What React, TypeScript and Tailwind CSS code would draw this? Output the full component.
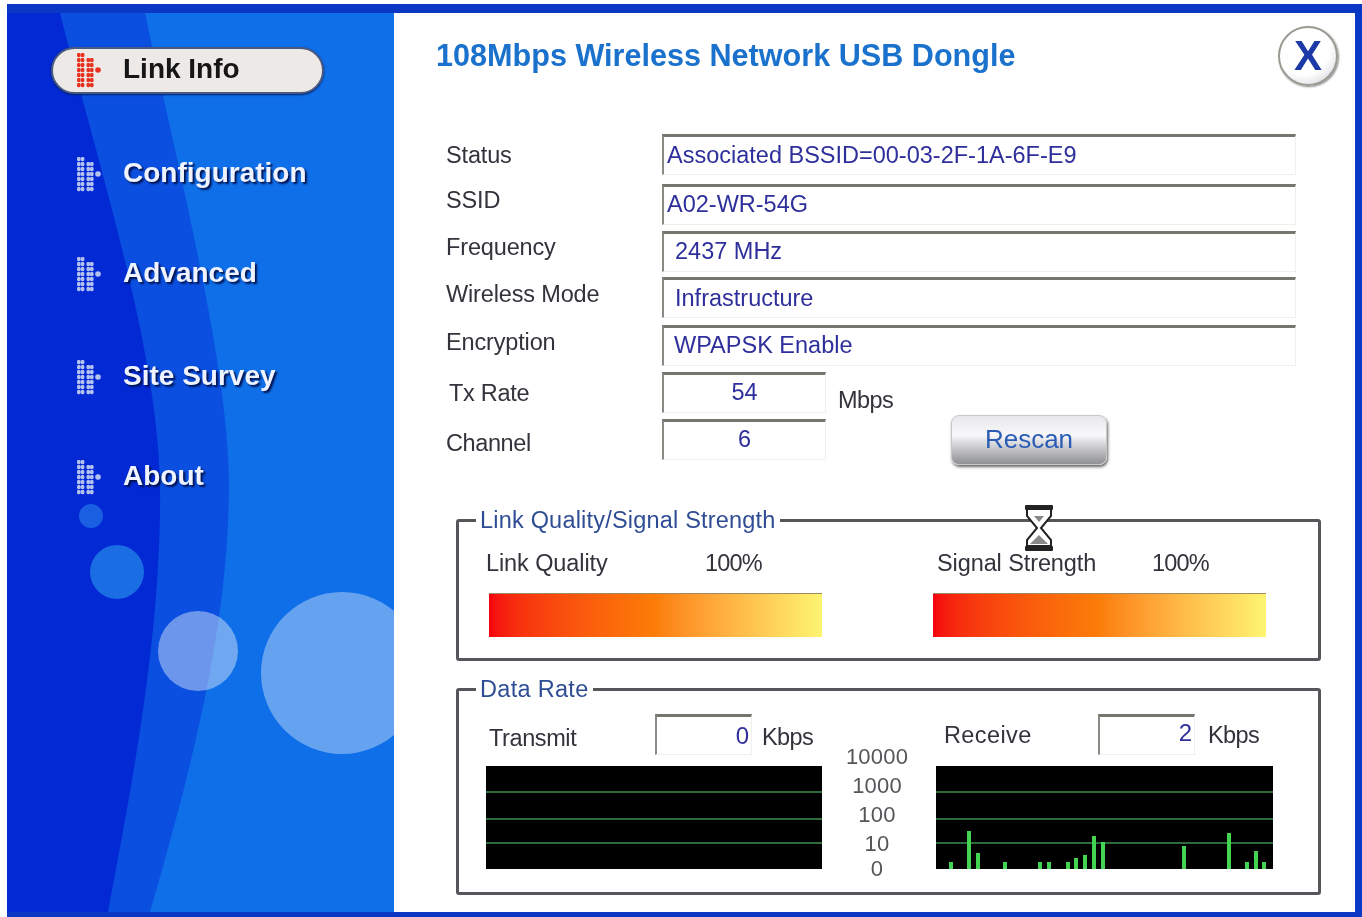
const FIELDS = [
  { label: "Status", value: "Associated BSSID=00-03-2F-1A-6F-E9", rowClass: "mt-0", labelClass: "pb-0", valueClass: "pl-[3px] pb-[2px]" },
  { label: "SSID", value: "A02-WR-54G", rowClass: "mt-[9px]", labelClass: "pb-[10px]", valueClass: "pl-[3px] pb-[3px]" },
  { label: "Frequency", value: "2437 MHz", rowClass: "mt-[6px]", labelClass: "pb-[9px]", valueClass: "pl-[11px] pb-[3px]" },
  { label: "Wireless Mode", value: "Infrastructure", rowClass: "mt-[5px]", labelClass: "pb-[7px]", valueClass: "pl-[11px] pb-[2px]" },
  { label: "Encryption", value: "WPAPSK Enable", rowClass: "mt-[7px]", labelClass: "pb-[8px]", valueClass: "pl-[10px] pb-[3px]" },
];

const NAV = ["Link Info", "Configuration", "Advanced", "Site Survey", "About"];
const NAV_GAPS = ["mt-[34px]", "mt-[57px]", "mt-[53px]", "mt-[56px]", "mt-[53px]"];

const BARS: [number, number][] = [
  [15, 96], [33, 65], [42, 87], [69, 96], [104, 96], [113, 96], [132, 96], [140, 92],
  [149, 89], [158, 70], [167, 76], [248, 80], [293, 67], [311, 96], [320, 85], [328, 96],
];

function DotIcon({ active }: { active: boolean }) {
  const fill = active ? "#e8321f" : "#b4c2f0";
  const cols: [number, number[]][] = [
    [0, [0, 5, 10, 15, 20, 25, 30]],
    [3.8, [0, 5, 10, 15, 20, 25, 30]],
    [9.5, [5, 10, 15, 20, 25, 30]],
    [13, [5, 10, 15, 20, 25, 30]],
  ];
  return (
    <svg width="24" height="35" viewBox="0 0 24 35" className="shrink-0">
      {cols.map(([x, ys]) =>
        ys.map((y) => <rect key={`${x}-${y}`} x={x} y={y} width="3.6" height="4.2" rx="1.4" fill={fill} />),
      )}
      <circle cx="21" cy="17" r="2.8" fill={fill} />
    </svg>
  );
}

function NavItem({ label, active, gap }: { label: string; active: boolean; gap: string }) {
  return (
    <div
      className={`${gap} ml-[44px] w-[273px] h-[47px] flex items-center rounded-full ${
        active ? "pl-[24px] bg-[#ece9e7] border-2 border-[#4a5a80] shadow-[0_1px_2px_#00206a]" : "pl-[26px]"
      }`}
    >
      <DotIcon active={active} />
      <span
        className={`ml-[22px] pb-[4px] text-[28px] font-bold whitespace-nowrap ${
          active ? "text-[#161616]" : "text-[#eef3ff] [text-shadow:2px_2px_2px_#00124f]"
        }`}
      >
        {label}
      </span>
    </div>
  );
}

function Sidebar() {
  return (
    <aside className="relative w-[387px] shrink-0 overflow-hidden bg-[#0f6fe8]">
      <svg width="387" height="899" viewBox="0 0 387 899" className="absolute inset-0">
        <path d="M0 0H138C165 130 222 350 222 470C222 620 180 770 143 899H0Z" fill="#0b4fe0" />
        <path d="M0 0H53C90 150 150 330 153 470C155 620 125 770 101 899H0Z" fill="#0229d4" />
        <circle cx="84" cy="503" r="12" fill="#1a5fe2" />
        <circle cx="110" cy="559" r="27" fill="#1a6de2" />
        <circle cx="191" cy="638" r="40" fill="#ffffff" fillOpacity="0.4" />
        <circle cx="335" cy="660" r="81" fill="#ffffff" fillOpacity="0.36" />
      </svg>
      <nav className="relative flex flex-col">
        {NAV.map((label, i) => (
          <NavItem key={label} label={label} active={i === 0} gap={NAV_GAPS[i]} />
        ))}
      </nav>
    </aside>
  );
}

function Box({ className, children }: { className: string; children?: React.ReactNode }) {
  return (
    <div
      className={`h-[41px] shrink-0 flex items-center border-t-[3px] border-l-[2px] border-r border-b border-t-[#76766e] border-l-[#8a8a84] border-r-[#efefec] border-b-[#efefec] text-[#2f2f9c] ${className}`}
    >
      {children}
    </div>
  );
}

function Meter({ label, labelWidth, barClass, labelClass }: { label: string; labelWidth: string; barClass: string; labelClass: string }) {
  return (
    <div className={barClass}>
      <div className="flex h-[30px] items-center text-[#33333b] text-[23.5px] tracking-[-0.1px]">
        <span className={`${labelWidth} ${labelClass}`}>{label}</span>
        <span className="tracking-[-0.8px]">100%</span>
      </div>
      <div className="mt-[15px] w-[333px] h-[44px] border-t border-[#a08a60] bg-gradient-to-r from-[#f5000f] via-[#fb7d08] to-[#fdf472]" />
    </div>
  );
}

function Chart({ bars, width }: { bars: [number, number][]; width: number }) {
  return (
    <svg width={width} height="103" viewBox={`0 0 ${width} 103`} className="block">
      <rect width={width} height="103" fill="#000" />
      {[25, 52, 76].map((y) => (
        <rect key={y} y={y} width={width} height="2" fill="#2c6b3a" />
      ))}
      {bars.map(([x, y]) => (
        <rect key={x} x={x - 2} y={y} width="4" height={103 - y} fill="#43d552" />
      ))}
    </svg>
  );
}

function RateCol({
  title,
  value,
  titleWidth,
  titleClass,
  valueClass,
  bars,
  width,
  kbpsClass,
}: {
  title: string;
  value: string;
  titleWidth: string;
  titleClass: string;
  valueClass: string;
  bars: [number, number][];
  width: number;
  kbpsClass: string;
}) {
  return (
    <div>
      <div className="mt-[10px] h-[41px] flex items-center text-[#33333b] text-[23.5px] tracking-[-0.4px]">
        <span className={`${titleWidth} ${titleClass}`}>{title}</span>
        <Box className={`w-[97px] justify-end pr-[2px] text-[24px] tracking-normal ${valueClass}`}>{value}</Box>
        <span className={`${kbpsClass} tracking-[-0.6px]`}>Kbps</span>
      </div>
      <div className="mt-[11px]">
        <Chart bars={bars} width={width} />
      </div>
    </div>
  );
}

function Hourglass() {
  return (
    <svg width="32" height="50" viewBox="0 0 32 50" className="absolute left-[629px] top-[490px]">
      <path d="M4 7V13L14 25L4 37V43H28V37L18 25L28 13V7" fill="#fff" stroke="#222" strokeWidth="2" />
      <rect x="2" y="2" width="28" height="5" rx="1" fill="#222" />
      <rect x="2" y="43" width="28" height="5" rx="1" fill="#222" />
      <path d="M11 13H21L16 19Z" fill="#888" />
      <path d="M7 41L16 32L25 41Z" fill="#888" />
    </svg>
  );
}

function Main() {
  return (
    <main className="relative flex-1 bg-white flex flex-col pl-[42px] pr-[17px] text-[23.5px] leading-[28px] text-[#33333b]">
      <header className="mt-[13px] h-[60px] flex items-center justify-between">
        <h1 className="pb-[3px] text-[30.6px] font-bold text-[#1a72cc] whitespace-nowrap">108Mbps Wireless Network USB Dongle</h1>
        <div className="w-[60px] h-[60px] rounded-full border-2 border-[#9a9a92] bg-[radial-gradient(circle_at_40%_35%,#ffffff_55%,#c8cad0_100%)] flex items-center justify-center shadow-[1px_1px_2px_#888]">
          <span className="text-[42px] font-bold leading-none text-[#1b3aa8]">X</span>
        </div>
      </header>

      <section className="mt-[48px] ml-[10px]">
        {FIELDS.map((f) => (
          <div key={f.label} className={`flex items-center h-[41px] ${f.rowClass}`}>
            <span className={`w-[216px] tracking-[-0.15px] ${f.labelClass}`}>{f.label}</span>
            <Box className={`w-[634px] whitespace-nowrap ${f.valueClass}`}>{f.value}</Box>
          </div>
        ))}
        <div className="flex mt-[6px]">
          <div className="w-[505px]">
            <div className="flex items-center h-[41px]">
              <span className="w-[216px] pl-[3px] tracking-[-0.3px]">Tx Rate</span>
              <Box className="w-[164px] justify-center pb-[3px]">54</Box>
              <span className="ml-[12px] pt-[14px] tracking-[-0.6px]">Mbps</span>
            </div>
            <div className="flex items-center h-[41px] mt-[6px]">
              <span className="w-[216px] pt-[6px] tracking-[-0.4px]">Channel</span>
              <Box className="w-[164px] justify-center pb-[3px]">6</Box>
            </div>
          </div>
          <button className="mt-[43px] w-[156px] h-[50px] pb-[2px] rounded-[8px] border border-[#c8c8c8] bg-gradient-to-b from-[#e8e8ec] via-[#f8f8fa] via-40% to-[#8f9094] shadow-[1px_2px_3px_#666] text-[26px] text-[#2a5cb4]">
            Rescan
          </button>
        </div>
      </section>

      <fieldset className="mt-[40px] ml-[20px] mr-[17px] h-[156px] border-[3px] border-[#55565a] rounded-[3px]">
        <legend className="ml-[17px] px-[4px] h-[30px] leading-[30px] text-[23.5px] tracking-[0.2px] text-[#2f4d94]">
          Link Quality/Signal Strength
        </legend>
        <div className="flex mt-[13px]">
          <Meter label="Link Quality" labelWidth="w-[219px]" labelClass="-ml-[3px]" barClass="ml-[30px]" />
          <Meter label="Signal Strength" labelWidth="w-[215px]" labelClass="ml-[4px]" barClass="ml-[111px]" />
        </div>
      </fieldset>

      <fieldset className="mt-[13px] ml-[20px] mr-[17px] h-[221px] border-[3px] border-[#55565a] rounded-[3px]">
        <legend className="ml-[17px] px-[4px] h-[30px] leading-[30px] text-[23.5px] tracking-[0.3px] text-[#2f4d94]">Data Rate</legend>
        <div className="flex pl-[27px]">
          <RateCol title="Transmit" value="0" titleWidth="w-[169px]" titleClass="pl-[3px] pt-[6px]" valueClass="pt-0" bars={[]} width={336} kbpsClass="ml-[10px] pt-[4px]" />
          <div className="w-[118px] ml-[-4px] mt-[38px] flex flex-col items-center text-[22px] leading-[29px] text-[#55565a] tracking-[0.2px]">
            <span>10000</span>
            <span>1000</span>
            <span>100</span>
            <span>10</span>
            <span className="-mt-[4px]">0</span>
          </div>
          <RateCol title="Receive" value="2" titleWidth="w-[162px]" titleClass="pl-[8px] tracking-[0.4px]" valueClass="pb-[5px]" bars={BARS} width={337} kbpsClass="ml-[13px]" />
        </div>
      </fieldset>
      <Hourglass />
    </main>
  );
}

export default function App() {
  return (
    <div className="w-[1362px] h-[917px] overflow-hidden bg-white pt-[4px] pl-[7px] flex flex-col [font-family:'Liberation_Sans',Arial,sans-serif] blur-[0.7px]">
      <div className="h-[9px] shrink-0 bg-[#0a38c4]" />
      <div className="flex flex-1 min-h-0">
        <Sidebar />
        <Main />
        <div className="w-[7px] shrink-0 bg-[#0a38c8]" />
      </div>
      <div className="h-[5px] shrink-0 bg-[#0a38c4]" />
    </div>
  );
}
